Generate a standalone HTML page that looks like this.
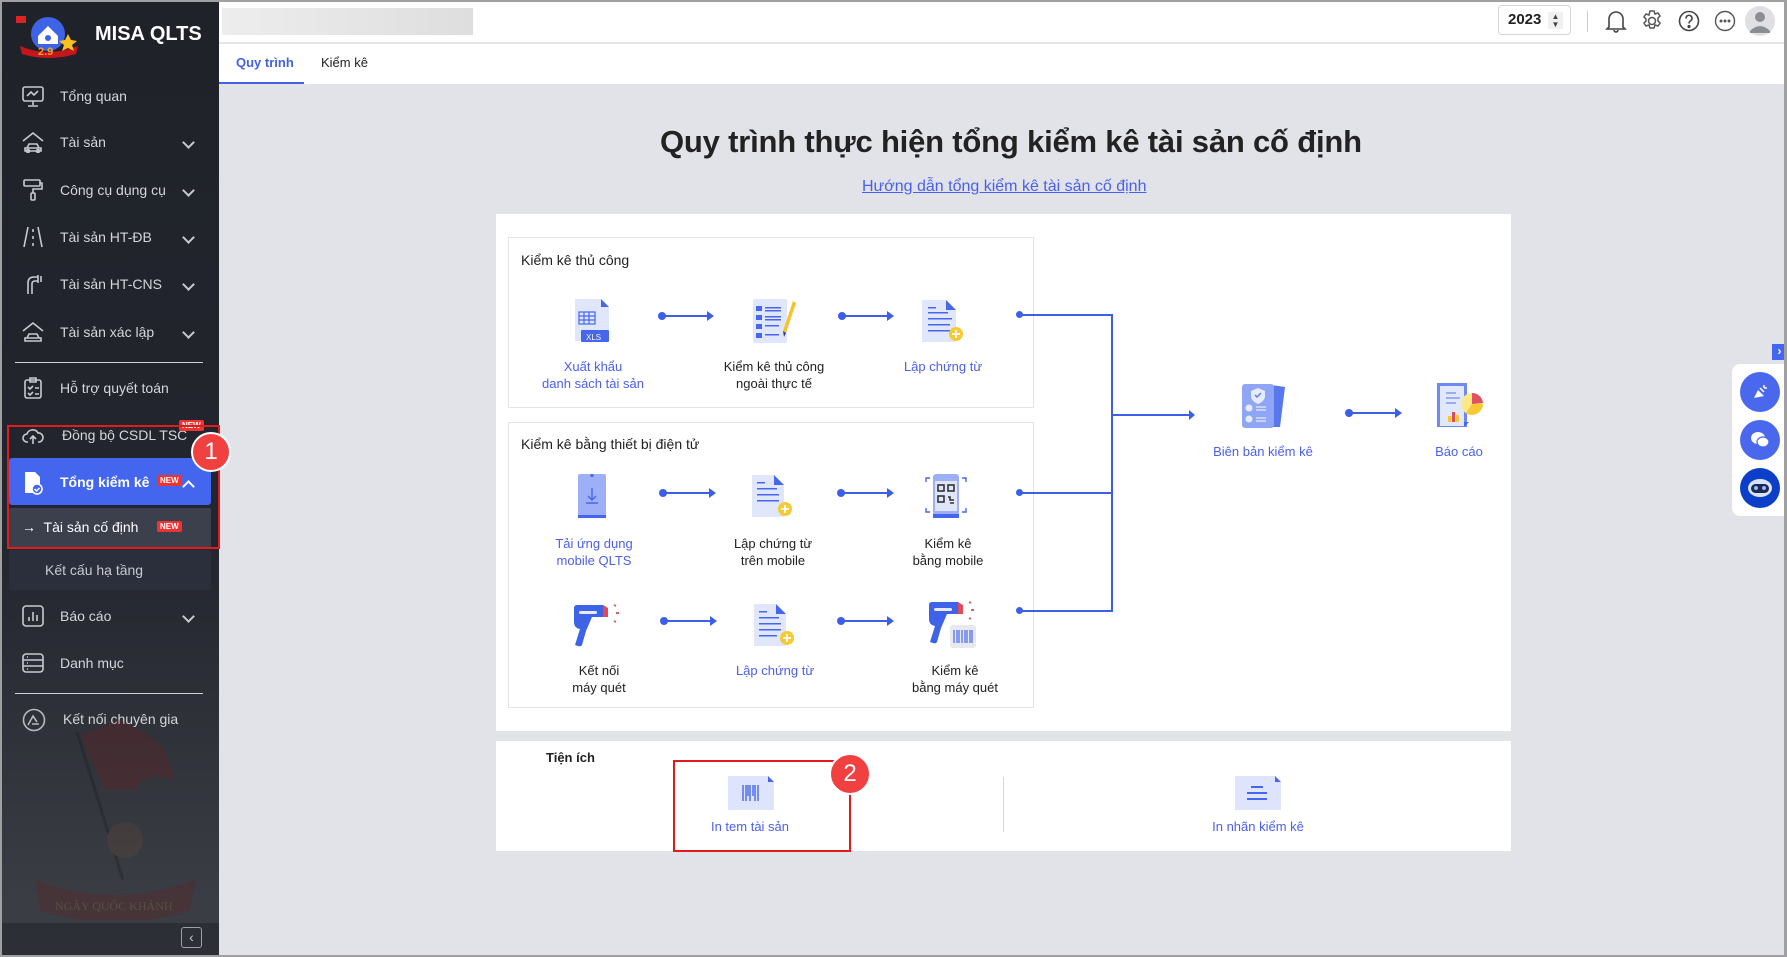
<!DOCTYPE html>
<html><head><meta charset="utf-8">
<style>
*{box-sizing:border-box;margin:0;padding:0}
body{width:1787px;height:957px;overflow:hidden;font-family:"Liberation Sans",sans-serif;background:#e1e3e8;position:relative;color:#212121}
.abs{position:absolute}
#frame{position:absolute;left:0;top:0;width:1787px;height:957px;border:2px solid #a0a0a0;border-right-width:3px;pointer-events:none;z-index:50}
#side{left:0;top:0;width:219px;height:957px;background:linear-gradient(#1f2229 0,#23262e 550px,#3a3d44 900px)}
.si{position:absolute;left:0;width:219px;height:40px;color:#d4d6dc;font-size:14px;line-height:40px}
.si span{position:absolute;left:60px}
.si svg{position:absolute;left:22px;top:9px}
.chev{position:absolute;left:184px;top:16px;width:9px;height:9px;border-right:2px solid #c8cad0;border-bottom:2px solid #c8cad0;transform:rotate(45deg)}
.new{position:absolute;background:#e33;color:#fff;font-size:8px;font-weight:bold;line-height:11px;padding:0 3px;border-radius:2px}
.hr{position:absolute;left:15px;width:188px;height:1px;background:#cfd1d6}
.lbl{position:absolute;font-size:13px;text-align:center;line-height:17px;width:180px}
.blue{color:#4a5ff0}
.arr{position:absolute;height:2px;background:#3b5fe8}
.arr:before{content:"";position:absolute;left:-3px;top:-3px;width:8px;height:8px;border-radius:50%;background:#3b5fe8}
.arr:after{content:"";position:absolute;right:-2px;top:-4px;border-left:7px solid #3b5fe8;border-top:5px solid transparent;border-bottom:5px solid transparent}
.ln{position:absolute;background:#3b5fe8}
.box{position:absolute;background:#fff;border:1px solid #e2e4e8}
</style></head><body>
<div id="side" class="abs">
 <svg class="abs" style="left:14px;top:14px" width="68" height="44" viewBox="0 0 68 44">
  <rect x="2" y="2" width="10" height="7" fill="#d22"/>
  <circle cx="34" cy="20" r="17" fill="#3f63e6"/>
  <path d="M24 22 L34 12 L44 22 V30 H24Z" fill="#fff"/>
  <circle cx="34" cy="24" r="3" fill="#3f63e6"/>
  <path d="M6 32 Q34 44 64 32 L62 40 Q34 48 8 40Z" fill="#c4161c"/>
  <text x="24" y="41" font-size="11" font-weight="bold" fill="#f8a01c" font-family="Liberation Sans">2.9</text>
  <path d="M54 20 l3 6 6 1 -5 4 2 6 -6-3 -6 3 2-6 -5-4 6-1z" fill="#f7c21f"/>
 </svg>
 <div class="abs" style="left:95px;top:23px;color:#fff;font-size:20px;font-weight:bold">MISA QLTS</div>

 <div class="si" style="top:76px"><svg width="22" height="22" fill="none" stroke="#c8cad0" stroke-width="1.6"><rect x="1" y="2" width="20" height="14" rx="2"/><path d="M11 16v4M6 21h10M5 11l4-4 3 3 4-4"/></svg><span>Tổng quan</span></div>
 <div class="si" style="top:122px"><svg width="22" height="22" fill="none" stroke="#c8cad0" stroke-width="1.6"><path d="M1 10 L11 2 L21 10M3 17h16v3H3zM5 17l2-4h8l2 4"/><circle cx="6" cy="20" r="1.5"/><circle cx="16" cy="20" r="1.5"/></svg><span>Tài sản</span><i class="chev"></i></div>
 <div class="si" style="top:170px"><svg width="22" height="22" fill="none" stroke="#c8cad0" stroke-width="1.6"><rect x="2" y="1" width="16" height="6" rx="1"/><path d="M18 4h2v6H11v4"/><rect x="9" y="14" width="4" height="7" rx="1"/></svg><span>Công cụ dụng cụ</span><i class="chev"></i></div>
 <div class="si" style="top:217px"><svg width="22" height="22" fill="none" stroke="#c8cad0" stroke-width="1.6"><path d="M6 1 L2 21M16 1l4 20M11 3v3M11 10v3M11 17v3"/></svg><span>Tài sản HT-ĐB</span><i class="chev"></i></div>
 <div class="si" style="top:264px"><svg width="22" height="22" fill="none" stroke="#c8cad0" stroke-width="1.6"><path d="M6 21V10q0-6 6-6h4M10 21V11q0-3 3-3h3M16 2v8M19 3v6"/></svg><span>Tài sản HT-CNS</span><i class="chev"></i></div>
 <div class="si" style="top:312px"><svg width="22" height="22" fill="none" stroke="#c8cad0" stroke-width="1.6"><path d="M1 10 L11 2 L21 10M3 17h16v3H3zM5 17l2-4h8l2 4"/></svg><span>Tài sản xác lập</span><i class="chev"></i></div>
 <div class="hr" style="top:362px"></div>
 <div class="si" style="top:368px"><svg width="22" height="22" fill="none" stroke="#c8cad0" stroke-width="1.6"><rect x="3" y="3" width="16" height="18" rx="2"/><path d="M8 1h6v4H8zM6 10l2 2 3-3M13 11h4M6 16l2 2 3-3M13 17h4"/></svg><span>Hỗ trợ quyết toán</span></div>
 <div class="si" style="top:415px"><svg width="22" height="22" fill="none" stroke="#c8cad0" stroke-width="1.6"><path d="M6 18H5a4 4 0 010-8 6 6 0 0111-1 4 4 0 011 9h-1M11 20v-8M8 15l3-3 3 3"/></svg><span style="left:62px">Đồng bộ CSDL TSC</span><b class="new" style="left:179px;top:5px">NEW</b></div>
 <div class="abs" style="left:9px;top:458px;width:202px;height:47px;background:#4466ee;border-radius:3px"></div>
 <div class="si" style="top:462px;color:#fff;font-weight:bold"><svg width="22" height="24" viewBox="0 0 22 24"><path d="M3 1h10l5 5v16H3z" fill="#fff"/><circle cx="15" cy="18" r="5" fill="#4466ee" stroke="#fff" stroke-width="1.6"/><path d="M12.5 18l2 2 3-3" stroke="#fff" fill="none" stroke-width="1.5"/></svg><span>Tổng kiểm kê</span><b class="new" style="left:157px;top:13px">NEW</b><i class="chev" style="transform:rotate(225deg);top:20px;border-color:#fff"></i></div>
 <div class="abs" style="left:9px;top:508px;width:202px;height:40px;background:#3c404c;border-radius:2px"></div>
 <div class="abs" style="left:22px;top:519px;color:#fff;font-size:14px">→&nbsp; Tài sản cố định</div>
 <b class="new" style="left:157px;top:521px">NEW</b>
 <div class="abs" style="left:9px;top:550px;width:202px;height:40px;background:#2b2f3b;border-radius:2px"></div>
 <div class="abs" style="left:45px;top:562px;color:#c8cad0;font-size:14px">Kết cấu hạ tầng</div>
 <div class="si" style="top:596px"><svg width="22" height="22" fill="none" stroke="#c8cad0" stroke-width="1.6"><rect x="1" y="1" width="20" height="20" rx="3"/><path d="M7 16v-4M11 16V7M15 16v-6"/></svg><span>Báo cáo</span><i class="chev"></i></div>
 <div class="si" style="top:643px"><svg width="22" height="22" fill="none" stroke="#c8cad0" stroke-width="1.6"><rect x="1" y="2" width="20" height="18" rx="3"/><path d="M1 8h20M1 14h20M5 5h1M5 11h1M5 17h1"/></svg><span>Danh mục</span></div>
 <div class="hr" style="top:693px"></div>
 <div class="si" style="top:699px"><svg width="24" height="24" fill="none" stroke="#b8bac0" stroke-width="1.6"><circle cx="12" cy="12" r="10.5"/><path d="M6 17l5-9 4 6M10 16h7"/></svg><span style="left:63px">Kết nối chuyên gia</span></div>
 <svg class="abs" style="left:25px;top:720px" width="180" height="200" viewBox="0 0 180 200" opacity="0.25">
  <path d="M55 15 L95 0 Q120 10 140 30 L150 60 Q120 50 110 70 L80 70Z" fill="#7a1c1c"/>
  <path d="M52 12 L98 160" stroke="#111" stroke-width="3"/>
  <circle cx="100" cy="120" r="18" fill="#6b4a3a"/>
  <path d="M10 160 Q90 190 170 160 L165 190 Q90 215 15 190Z" fill="#6a1a1a"/>
  <text x="30" y="190" font-family="Liberation Serif" font-size="12" fill="#a88a3a">NGÀY QUỐC KHÁNH</text>
 </svg>
 <div class="abs" style="left:0;top:923px;width:219px;height:34px;background:#2c2f36"></div>
 <div class="abs" style="left:181px;top:927px;width:21px;height:21px;border:1px solid #9ea0a6;border-radius:3px;color:#c8cad0;font-size:14px;line-height:18px;text-align:center">‹</div>
</div>
<div class="abs" style="left:7px;top:425px;width:213px;height:124px;border:2px solid #e21c1c;z-index:5"></div>
<div class="abs" style="left:191px;top:432px;width:40px;height:40px;border-radius:50%;background:#f04040;border:2px solid #fff;color:#fff;font-size:24px;line-height:36px;text-align:center;z-index:6">1</div>

<div class="abs" style="left:219px;top:0;width:1568px;height:43px;background:#fff;border-bottom:1px solid #e6e6e6"></div>
<div class="abs" style="left:222px;top:8px;width:251px;height:27px;background:linear-gradient(90deg,#ededed,#dedede)"></div>
<div class="abs" style="left:1498px;top:5px;width:73px;height:30px;border:1px solid #d5d5d5;border-radius:4px;background:#fff;font-size:15px;font-weight:bold;line-height:28px;padding-left:9px">2023</div>
<div class="abs" style="left:1548px;top:12px;width:15px;height:17px;background:#f0f0f0;font-size:8px;line-height:8px;text-align:center;color:#444;padding-top:1px">▲<br>▼</div>
<div class="abs" style="left:1587px;top:11px;width:1px;height:21px;background:#ccc"></div>
<svg class="abs" style="left:1605px;top:9px" width="22" height="24" fill="none" stroke="#444" stroke-width="1.6"><path d="M4 18V10a7 7 0 0114 0v8l2 2H2zM9 21a2 2 0 004 0"/></svg>
<svg class="abs" style="left:1641px;top:10px" width="22" height="22" fill="none" stroke="#555" stroke-width="1.5"><circle cx="11" cy="11" r="3.5"/><path d="M9 1h4l1 3 3-1 2 3-2 2 0 3 2 2-2 3-3-1-1 3H9l-1-3-3 1-2-3 2-2V9L3 7l2-3 3 1z"/></svg>
<svg class="abs" style="left:1678px;top:10px" width="22" height="22" fill="none" stroke="#444" stroke-width="1.6"><circle cx="11" cy="11" r="9.5"/><path d="M8 8.5a3 3 0 115 2c-1.5 1-2 1.5-2 3"/><circle cx="11" cy="16.5" r=".8" fill="#444"/></svg>
<svg class="abs" style="left:1714px;top:10px" width="22" height="22" fill="none" stroke="#555" stroke-width="1.4"><circle cx="11" cy="11" r="9.5"/><circle cx="7" cy="11" r=".8" fill="#555"/><circle cx="11" cy="11" r=".8" fill="#555"/><circle cx="15" cy="11" r=".8" fill="#555"/></svg>
<svg class="abs" style="left:1744px;top:5px" width="32" height="32"><circle cx="16" cy="16" r="15" fill="#e0e0e2"/><circle cx="16" cy="12" r="5" fill="#8a8d94"/><path d="M6 26q10-10 20 0v2H6z" fill="#8a8d94"/></svg>

<div class="abs" style="left:219px;top:44px;width:1568px;height:40px;background:#fff"></div>
<div class="abs" style="left:236px;top:55px;color:#4361e8;font-size:13px;font-weight:bold">Quy trình</div>
<div class="abs" style="left:219px;top:82px;width:85px;height:2px;background:#4361e8"></div>
<div class="abs" style="left:321px;top:55px;font-size:13px">Kiểm kê</div>

<div class="abs" style="left:219px;top:124px;width:1568px;font-size:31px;font-weight:bold;color:#222;letter-spacing:-0.2px"><div style="position:absolute;left:441px;width:686px;white-space:nowrap;text-align:center">Quy trình thực hiện tổng kiểm kê tài sản cố định</div></div>
<div class="abs" style="left:862px;top:178px;color:#4a5ff0;font-size:16px;text-decoration:underline;white-space:nowrap">Hướng dẫn tổng kiểm kê tài sản cố định</div>

<div class="abs" style="left:496px;top:214px;width:1015px;height:517px;background:#fff"></div>
<div class="box" style="left:508px;top:237px;width:526px;height:171px"></div>
<div class="box" style="left:508px;top:422px;width:526px;height:286px"></div>
<div class="abs" style="left:521px;top:252px;font-size:14px">Kiểm kê thủ công</div>
<div class="abs" style="left:521px;top:436px;font-size:14px">Kiểm kê bằng thiết bị điện tử</div>

<svg class="abs" style="left:573px;top:299px" width="40" height="46"><path d="M2 0h26l8 8v34H2z" fill="#e0e6fb"/><path d="M28 0l8 8h-8z" fill="#4666ee"/><g stroke="#4666ee" stroke-width="1.2" fill="none"><rect x="6" y="13" width="16" height="12"/><path d="M6 17h16M6 21h16M11 13v12M16 13v12"/></g><rect x="8" y="31" width="28" height="12" rx="1" fill="#4666ee"/><text x="13" y="41" font-size="8" fill="#fff" font-family="Liberation Sans">XLS</text></svg>
<svg class="abs" style="left:753px;top:299px" width="44" height="46"><rect x="0" y="0" width="34" height="44" rx="2" fill="#e0e6fb"/><g fill="#4666ee"><rect x="3" y="7" width="6" height="5"/><rect x="3" y="16" width="6" height="5"/><rect x="3" y="25" width="6" height="5"/><rect x="3" y="34" width="6" height="5"/><rect x="12" y="8" width="16" height="1.5"/><rect x="12" y="11" width="16" height="1.5"/><rect x="12" y="17" width="16" height="1.5"/><rect x="12" y="20" width="16" height="1.5"/><rect x="12" y="26" width="14" height="1.5"/><rect x="12" y="35" width="14" height="1.5"/></g><path d="M40 2l3 2-10 30-3-2z" fill="#f5c42c"/><path d="M30 32l3 2-2 4z" fill="#2a3a9a"/></svg>
<svg class="abs" style="left:922px;top:300px" width="44" height="44"><path d="M0 0h24l10 10v32H0z" fill="#e0e6fb"/><path d="M24 0l10 10H24z" fill="#4666ee"/><g fill="#4666ee"><rect x="6" y="7" width="8" height="1.5"/><rect x="6" y="12" width="20" height="1.5"/><rect x="6" y="18" width="24" height="1.5"/><rect x="6" y="24" width="22" height="1.5"/><rect x="6" y="30" width="22" height="1.5"/></g><circle cx="34" cy="34" r="7" fill="#f8c932"/><path d="M34 30v8M30 34h8" stroke="#fff" stroke-width="1.8"/></svg>
<div class="lbl blue" style="left:503px;top:358px">Xuất khẩu<br>danh sách tài sản</div>
<div class="lbl" style="left:684px;top:358px">Kiểm kê thủ công<br>ngoài thực tế</div>
<div class="lbl blue" style="left:853px;top:358px">Lập chứng từ</div>
<div class="arr" style="left:661px;top:315px;width:51px"></div>
<div class="arr" style="left:841px;top:315px;width:51px"></div>

<svg class="abs" style="left:578px;top:474px" width="30" height="46"><rect x="0" y="0" width="28" height="44" rx="2" fill="#9db0f7"/><rect x="0" y="41" width="28" height="3" fill="#4666ee"/><circle cx="14" cy="1.5" r="1.6" fill="#4666ee"/><path d="M14 14v12M10 22l4 4 4-4M8 29h12" stroke="#4666ee" stroke-width="1.4" fill="none"/></svg>
<svg class="abs" style="left:752px;top:475px" width="44" height="44"><path d="M0 0h22l10 10v32H0z" fill="#e0e6fb"/><path d="M22 0l10 10H22z" fill="#4666ee"/><g fill="#4666ee"><rect x="5" y="7" width="8" height="1.5"/><rect x="5" y="13" width="20" height="1.5"/><rect x="5" y="19" width="22" height="1.5"/><rect x="5" y="25" width="22" height="1.5"/></g><circle cx="33" cy="34" r="7" fill="#f8c932"/><path d="M33 30v8M29 34h8" stroke="#fff" stroke-width="1.8"/></svg>
<svg class="abs" style="left:925px;top:474px" width="42" height="46"><rect x="8" y="0" width="26" height="44" rx="3" fill="#9db0f7"/><rect x="10" y="7" width="22" height="30" fill="#dfe5fb"/><g fill="none" stroke="#333" stroke-width="1.6"><rect x="13" y="11" width="6" height="6"/><rect x="23" y="11" width="6" height="6"/><rect x="13" y="22" width="6" height="6"/><path d="M23 23h2v3h4M25 29h4"/></g><path d="M1 8V4h4M41 8V4h-4M1 34v4h4M41 34v4h-4" stroke="#4666ee" stroke-width="1.4" fill="none"/><rect x="8" y="40" width="26" height="4" fill="#4666ee"/></svg>
<div class="lbl blue" style="left:504px;top:535px">Tải ứng dụng<br>mobile QLTS</div>
<div class="lbl" style="left:683px;top:535px">Lập chứng từ<br>trên mobile</div>
<div class="lbl" style="left:858px;top:535px">Kiểm kê<br>bằng mobile</div>
<div class="arr" style="left:662px;top:492px;width:52px"></div>
<div class="arr" style="left:840px;top:492px;width:52px"></div>

<svg class="abs" style="left:572px;top:604px" width="50" height="46"><path d="M2 4q0-3 3-3h26l3 2v10H20l-6 14-4 14q-1 2-4 1l-3-1 5-16Q2 24 2 18z" fill="#3f63e6"/><path d="M31 1l5 3v9h-5z" fill="#e24a5a"/><rect x="7" y="7" width="18" height="3" rx="1.5" fill="#e6ebfc"/><path d="M42 1l2 1M44 9h3M42 17l2 1" stroke="#d06060" stroke-width="2"/></svg>
<svg class="abs" style="left:754px;top:604px" width="44" height="44"><path d="M0 0h22l10 10v32H0z" fill="#e0e6fb"/><path d="M22 0l10 10H22z" fill="#4666ee"/><g fill="#4666ee"><rect x="5" y="7" width="8" height="1.5"/><rect x="5" y="13" width="20" height="1.5"/><rect x="5" y="19" width="22" height="1.5"/><rect x="5" y="25" width="22" height="1.5"/><rect x="5" y="31" width="18" height="1.5"/></g><circle cx="33" cy="34" r="7" fill="#f8c932"/><path d="M33 30v8M29 34h8" stroke="#fff" stroke-width="1.8"/></svg>
<svg class="abs" style="left:927px;top:601px" width="50" height="48"><path d="M2 4q0-3 3-3h26l3 2v10H20l-6 14-4 14q-1 2-4 1l-3-1 5-16Q2 24 2 18z" fill="#3f63e6"/><path d="M31 1l5 3v9h-5z" fill="#e24a5a"/><rect x="7" y="7" width="18" height="3" rx="1.5" fill="#e6ebfc"/><path d="M42 1l2 1M44 9h3M42 17l2 1" stroke="#d06060" stroke-width="2"/><rect x="23" y="24" width="26" height="23" rx="3" fill="#e8e9ee"/><g stroke="#4666ee" stroke-width="1.2"><path d="M27 29v13M30 29v13M32 29v13M35 29v13M38 29v13M40 29v13M43 29v13M45 29v13"/></g></svg>
<div class="lbl" style="left:509px;top:662px">Kết nối<br>máy quét</div>
<div class="lbl blue" style="left:685px;top:662px">Lập chứng từ</div>
<div class="lbl" style="left:865px;top:662px">Kiểm kê<br>bằng máy quét</div>
<div class="arr" style="left:663px;top:620px;width:52px"></div>
<div class="arr" style="left:840px;top:620px;width:52px"></div>

<div class="ln" style="left:1019px;top:314px;width:93px;height:2px"></div>
<div class="ln" style="left:1019px;top:492px;width:93px;height:2px"></div>
<div class="ln" style="left:1019px;top:610px;width:93px;height:2px"></div>
<div class="ln" style="left:1111px;top:314px;width:2px;height:298px"></div>
<div class="abs" style="left:1016px;top:311px;width:7px;height:7px;border-radius:50%;background:#3b5fe8"></div>
<div class="abs" style="left:1016px;top:489px;width:7px;height:7px;border-radius:50%;background:#3b5fe8"></div>
<div class="abs" style="left:1016px;top:607px;width:7px;height:7px;border-radius:50%;background:#3b5fe8"></div>
<div class="ln" style="left:1112px;top:414px;width:78px;height:2px"></div>
<div class="abs" style="left:1189px;top:410px;border-left:6px solid #3b5fe8;border-top:5px solid transparent;border-bottom:5px solid transparent"></div>
<svg class="abs" style="left:1241px;top:383px" width="46" height="46"><path d="M30 2l14 2-5 40H31z" fill="#5878ee"/><rect x="1" y="1" width="32" height="44" rx="3" fill="#8fa5f6"/><path d="M17 5l7 3v5q0 5-7 8-7-3-7-8V8z" fill="#e6ebfc"/><path d="M14 12l2 2 4-4" stroke="#5878ee" stroke-width="1.4" fill="none"/><circle cx="8" cy="25" r="3.5" fill="#e6ebfc"/><circle cx="8" cy="36" r="3.5" fill="#e6ebfc"/><path d="M15 24h10M15 27h10M15 35h10M15 38h10" stroke="#e6ebfc" stroke-width="1.3"/></svg>
<div class="lbl blue" style="left:1173px;top:443px">Biên bản kiểm kê</div>
<div class="arr" style="left:1348px;top:412px;width:52px"></div>
<svg class="abs" style="left:1436px;top:382px" width="48" height="48"><rect x="1" y="1" width="30" height="44" fill="#6f89f2"/><path d="M4 4h24v40H4z" fill="#e2e8fc"/><path d="M10 11h10M10 16h14M10 21h10" stroke="#6f89f2" stroke-width="1.3"/><rect x="16" y="30" width="3" height="10" fill="#e24a5a"/><rect x="12" y="34" width="3" height="6" fill="#f8c932"/><rect x="20" y="33" width="3" height="7" fill="#f8c932"/><circle cx="36" cy="22" r="11" fill="#fbe88a"/><path d="M36 22V11a11 11 0 0111 10z" fill="#e0505e"/><path d="M36 22h11a11 11 0 01-17 9z" fill="#f8c932"/><path d="M28 40l5 0-5 5z" fill="#4666ee"/></svg>
<div class="lbl blue" style="left:1369px;top:443px">Báo cáo</div>

<div class="abs" style="left:496px;top:741px;width:1015px;height:110px;background:#fff"></div>
<div class="abs" style="left:546px;top:750px;font-size:13px;font-weight:bold">Tiện ích</div>
<svg class="abs" style="left:726px;top:776px" width="50" height="34"><path d="M2 0h40l6 6v28H2z" fill="#dde4fb"/><path d="M42 0l6 6h-6z" fill="#4666ee"/><g stroke="#4666ee" stroke-width="1.4"><path d="M17 9v16M20 9v16M22 9v11M24 9v16M27 9v11M29 9v16M32 9v16"/></g></svg>
<div class="lbl blue" style="left:660px;top:818px">In tem tài sản</div>
<div class="abs" style="left:1003px;top:777px;width:1px;height:55px;background:#d8d8d8"></div>
<svg class="abs" style="left:1233px;top:776px" width="50" height="34"><path d="M2 0h40l6 6v28H2z" fill="#dde4fb"/><path d="M42 0l6 6h-6z" fill="#4666ee"/><path d="M18 11h12M14 17h20M14 23h20" stroke="#4666ee" stroke-width="2"/></svg>
<div class="lbl blue" style="left:1168px;top:818px">In nhãn kiểm kê</div>
<div class="abs" style="left:673px;top:760px;width:178px;height:92px;border:2px solid #e21c1c"></div>
<div class="abs" style="left:829px;top:753px;width:42px;height:42px;border-radius:50%;background:#f04040;border:2px solid #fff;color:#fff;font-size:24px;line-height:38px;text-align:center">2</div>

<div class="abs" style="left:1772px;top:344px;width:15px;height:16px;background:#4466ee;color:#fff;font-size:12px;line-height:15px;text-align:center;font-weight:bold">›</div>
<div class="abs" style="left:1732px;top:364px;width:55px;height:152px;background:#fff;border-radius:8px 0 0 8px"></div>
<div class="abs" style="left:1740px;top:372px;width:40px;height:40px;border-radius:50%;background:#4a68ee"></div>
<svg class="abs" style="left:1750px;top:382px" width="20" height="20"><path d="M4 16l4-8 6 6z" fill="#fff"/><path d="M10 6l4 4M14 3v3M17 6h-3" stroke="#fff" stroke-width="1.5"/></svg>
<div class="abs" style="left:1740px;top:420px;width:40px;height:40px;border-radius:50%;background:#4a68ee"></div>
<svg class="abs" style="left:1749px;top:429px" width="22" height="22"><ellipse cx="9" cy="9" rx="7" ry="6" fill="#fff"/><ellipse cx="14" cy="13" rx="6" ry="5" fill="#fff" stroke="#4a68ee" stroke-width="1.2"/></svg>
<div class="abs" style="left:1740px;top:468px;width:40px;height:40px;border-radius:50%;background:#0b3fc9"></div>
<svg class="abs" style="left:1746px;top:477px" width="28" height="22"><ellipse cx="14" cy="11" rx="12" ry="9" fill="#d9e2fb"/><rect x="5" y="7" width="18" height="9" rx="4.5" fill="#1b2a55"/><circle cx="10" cy="11" r="2" fill="#9fb4f5"/><circle cx="18" cy="11" r="2" fill="#9fb4f5"/></svg>

<div id="frame"></div>
</body></html>
